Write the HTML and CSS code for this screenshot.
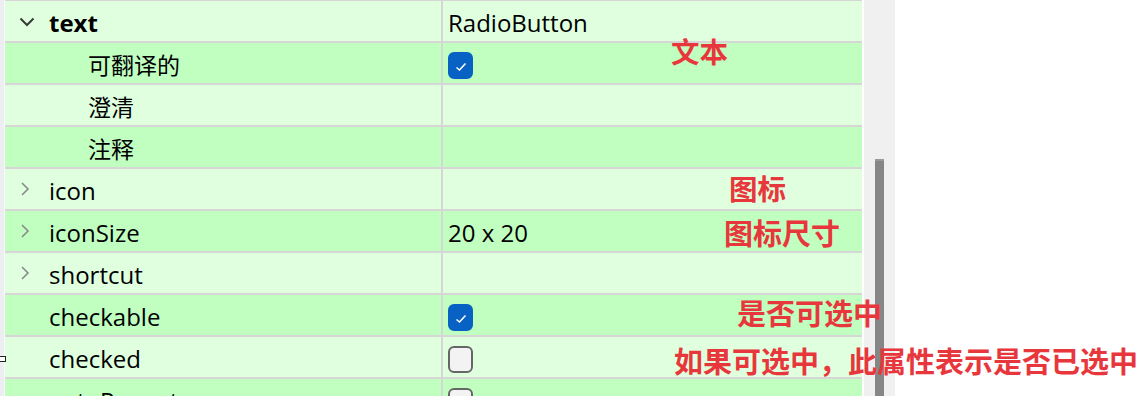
FILE: index.html
```html
<!DOCTYPE html>
<html lang="zh-CN">
<head>
    <meta charset="UTF-8">
    <title>属性编辑器</title>
    <link rel="stylesheet" href="styles.css">
</head>
<body>
<div class="panel">
    <div class="gutter"><span class="mark"></span></div>
    <div class="props">
        <div class="row light">
            <div class="name group">
                <svg class="arrow down" width="16" height="10" viewBox="0 0 16 10"><path d="M1.5 1.5 L8 8 L14.5 1.5" fill="none" stroke="#3a3a3a" stroke-width="2"/></svg>
                <b>text</b>
            </div>
            <div class="value">RadioButton</div>
        </div>
        <div class="row dark">
            <div class="name child">可翻译的</div>
            <div class="value"><span class="box on"><svg width="12" height="10" viewBox="0 0 12 10"><path d="M1.5 5.5 L4.5 8 L10.5 1.5" fill="none" stroke="#fff" stroke-width="1.6"/></svg></span></div>
        </div>
        <div class="row light">
            <div class="name child">澄清</div>
            <div class="value"></div>
        </div>
        <div class="row dark">
            <div class="name child">注释</div>
            <div class="value"></div>
        </div>
        <div class="row light">
            <div class="name">
                <svg class="arrow" width="10" height="14" viewBox="0 0 10 14"><path d="M2 1 L8 7 L2 13" fill="none" stroke="#8a8a8a" stroke-width="1.6"/></svg>
                icon
            </div>
            <div class="value"></div>
        </div>
        <div class="row dark">
            <div class="name">
                <svg class="arrow" width="10" height="14" viewBox="0 0 10 14"><path d="M2 1 L8 7 L2 13" fill="none" stroke="#8a8a8a" stroke-width="1.6"/></svg>
                iconSize
            </div>
            <div class="value">20 x 20</div>
        </div>
        <div class="row light">
            <div class="name">
                <svg class="arrow" width="10" height="14" viewBox="0 0 10 14"><path d="M2 1 L8 7 L2 13" fill="none" stroke="#8a8a8a" stroke-width="1.6"/></svg>
                shortcut
            </div>
            <div class="value"></div>
        </div>
        <div class="row dark">
            <div class="name">checkable</div>
            <div class="value"><span class="box on"><svg width="12" height="10" viewBox="0 0 12 10"><path d="M1.5 5.5 L4.5 8 L10.5 1.5" fill="none" stroke="#fff" stroke-width="1.6"/></svg></span></div>
        </div>
        <div class="row light">
            <div class="name">checked</div>
            <div class="value"><span class="box"></span></div>
        </div>
        <div class="row dark">
            <div class="name">autoRepeat</div>
            <div class="value"><span class="box"></span></div>
        </div>
    </div>
    <div class="spacer"></div>
    <div class="track"><div class="thumb"></div></div>
    <div class="blank"></div>

    <div class="notes">
        <span class="note n1">文本</span>
        <span class="note n2">图标</span>
        <span class="note n3">图标尺寸</span>
        <span class="note n4">是否可选中</span>
        <span class="note n5">如果可选中，此属性表示是否已选中</span>
    </div>
</div>
</body>
</html>
```

FILE: styles.css
```css
*{
    margin: 0;
    padding: 0;
    box-sizing: border-box;
}
body{
    background: #fff;
    font-family: "Open Sans", "Noto Sans CJK SC", sans-serif;
    color: #000;
}
.panel{
    position: relative;
    display: flex;
    height: 396px;
    overflow: hidden;
}
.gutter{
    position: relative;
    width: 5px;
    background: #eceef2;
    border-right: 1px solid #fbfbfb;
}
.gutter .mark{
    position: absolute;
    left: -2px;
    top: 356px;
    width: 8px;
    height: 6px;
    border: 1px solid #222;
    background: #fff;
}
.props{
    width: 857px;
    border-top: 1px solid #d6d6d6;
}
.row{
    display: flex;
    height: 42px;
    border-bottom: 2px solid #d6d6d6;
}
.row.light{
    background: #dfffdf;
}
.row.dark{
    background: #c0ffc0;
}
.name{
    display: flex;
    align-items: center;
    width: 438px;
    padding-left: 44px;
    padding-top: 2px;
    border-right: 2px solid #d6d6d6;
    font-size: 24px;
    position: relative;
}
.name .arrow{
    position: absolute;
    left: 15px;
    top: 13px;
}
.name .arrow.down{
    left: 14px;
    top: 16px;
}
.name b{
    font-weight: 700;
}
.name.child{
    padding-left: 83px;
    font-family: "Noto Sans CJK SC", sans-serif;
    font-size: 23px;
}
.value{
    flex: 1;
    display: flex;
    align-items: center;
    padding-left: 5px;
    padding-top: 2px;
    font-size: 24px;
}
.box{
    display: flex;
    align-items: center;
    justify-content: center;
    width: 25px;
    height: 27px;
    border: 2px solid #666;
    border-radius: 6px;
    background: #f3f3f3;
    margin-top: 2px;
}
.box.on{
    border-color: #0762c4;
    background: #0762c4;
}
.box.on svg{
    margin-top: 3px;
}
.spacer{
    width: 2px;
}
.track{
    width: 31px;
    background: #f0f0f0;
    padding: 159px 11px 0 11px;
}
.thumb{
    height: 100%;
    background: #868686;
    border-top: 2px solid #9a9a9a;
}
.blank{
    flex: 1;
}
.notes .note{
    position: absolute;
    white-space: nowrap;
    font-family: "Noto Sans CJK SC", sans-serif;
    font-weight: 700;
    color: #e8373c;
    line-height: 1;
    font-size: 28.5px;
}
.n1{ left: 671px; top: 37px; }
.n2{ left: 729px; top: 174px; }
.n3{ left: 724px; top: 218px; font-size: 29px !important; }
.n4{ left: 737px; top: 298px; font-size: 29px !important; }
.n5{ left: 674px; top: 346px; font-size: 29px !important; }
```
